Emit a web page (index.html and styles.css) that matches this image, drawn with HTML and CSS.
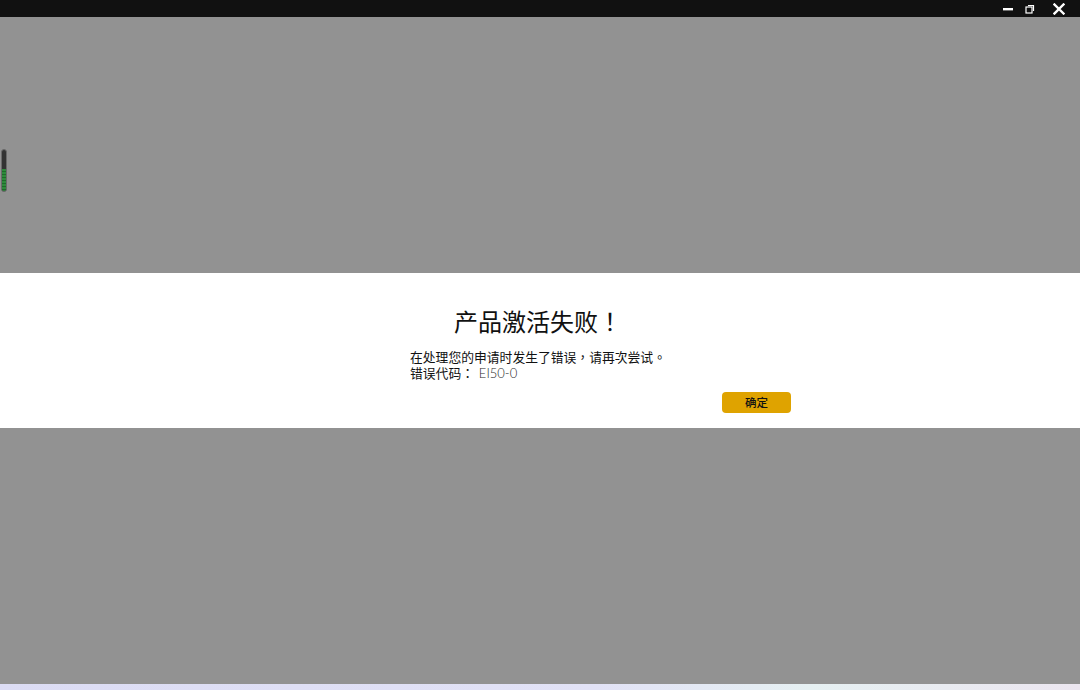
FILE: index.html
```html
<!DOCTYPE html>
<html lang="zh-TW">
<head>
<meta charset="utf-8">
<title>产品激活失败</title>
<link rel="stylesheet" href="styles.css">
</head>
<body>
<div class="app">
  <header class="topbar">
    <div class="controls">
      <span class="ctl min"><svg width="10" height="10" viewBox="0 0 10 10"><rect x="0" y="4" width="10" height="2.4" fill="#fff"/></svg></span>
      <span class="ctl restore"><svg width="10" height="10" viewBox="0 0 10 10"><path d="M3 1.5h5.5v5.5" fill="none" stroke="#fff" stroke-width="1.2"/><rect x="1" y="3" width="6" height="6" fill="none" stroke="#fff" stroke-width="1.2"/></svg></span>
      <span class="ctl close"><svg width="12" height="12" viewBox="0 0 12 12"><path d="M1.5 1.5L10.5 10.5M10.5 1.5L1.5 10.5" stroke="#fff" stroke-width="2.4" stroke-linecap="square"/></svg></span>
    </div>
  </header>
  <main class="stage">
    <div class="shade"></div>
    <section class="dialog">
      <div class="box">
        <div class="msg">
          <h1 class="title">产品激活失败！</h1>
          <p class="line">在处理您的申请时发生了错误，请再次尝试。</p>
          <p class="line">错误代码： <span class="code">EI50-0</span></p>
        </div>
        <button class="btn">确定</button>
      </div>
    </section>
    <div class="shade"></div>
    <div class="meter"><div class="meter-fill"></div></div>
  </main>
  <footer class="taskbar"></footer>
</div>
</body>
</html>
```
FILE: styles.css
```css
html, body {
  margin: 0;
  padding: 0;
  width: 1080px;
  height: 690px;
  overflow: hidden;
}
body {
  font-family: "Noto Sans CJK TC", sans-serif;
  background: #929292;
}
.app {
  display: flex;
  flex-direction: column;
  height: 690px;
}
.topbar {
  height: 17px;
  background: #111111;
  display: flex;
  justify-content: flex-end;
  flex: none;
}
.controls {
  display: flex;
  align-items: center;
  padding-right: 10px;
}
.ctl {
  display: flex;
  align-items: center;
  justify-content: center;
  height: 17px;
  width: 22px;
}
.restore { margin-right: 7px; }
.stage {
  flex: 1;
  display: flex;
  flex-direction: column;
  position: relative;
}
.shade {
  flex: 1;
  background: #929292;
}
.dialog {
  flex: none;
  height: 155px;
  box-sizing: border-box;
  background: #ffffff;
  padding: 32px 0 0 410px;
}
.box {
  width: 381px;
  display: flex;
  flex-direction: column;
}
.msg {
  align-self: flex-start;
  display: flex;
  flex-direction: column;
}
.title {
  margin: 0 0 12px 0;
  font-size: 24px;
  line-height: 32px;
  font-weight: 400;
  text-align: center;
  color: #111;
  font-family: "Noto Sans CJK TC", sans-serif;
}
.line {
  margin: 0;
  font-size: 12.8px;
  line-height: 16px;
  color: #111;
  font-family: "Noto Sans CJK TC", sans-serif;
  white-space: nowrap;
}
.code {
  font-family: "Lato", "Noto Sans", sans-serif;
  font-weight: 300;
  color: #2a2a2a;
  font-size: 13px;
  margin-left: 2px;
}
.btn {
  align-self: flex-end;
  margin-top: 11px;
  width: 69px;
  height: 21px;
  border: none;
  border-radius: 4px;
  background: #dfa300;
  color: #111;
  font-size: 11.5px;
  font-weight: 500;
  font-family: "Noto Sans CJK SC", sans-serif;
  padding: 0;
  line-height: 21px;
}
.meter {
  position: absolute;
  left: 1px;
  top: 132px;
  width: 6px;
  height: 43px;
  border-radius: 3px;
  background: #333;
  border: 1px solid #6a6a6a;
  box-sizing: border-box;
  overflow: hidden;
  display: flex;
  flex-direction: column;
  justify-content: flex-end;
}
.meter-fill {
  height: 22px;
  background: repeating-linear-gradient(to bottom, #2f8a3c 0 2px, #1e6b2a 2px 3px);
}
.taskbar {
  flex: none;
  height: 6px;
  background: linear-gradient(to right, #dcdcf4 0%, #e2e2f6 55%, #e6f0f2 75%, #ece6f0 100%);
}
```
